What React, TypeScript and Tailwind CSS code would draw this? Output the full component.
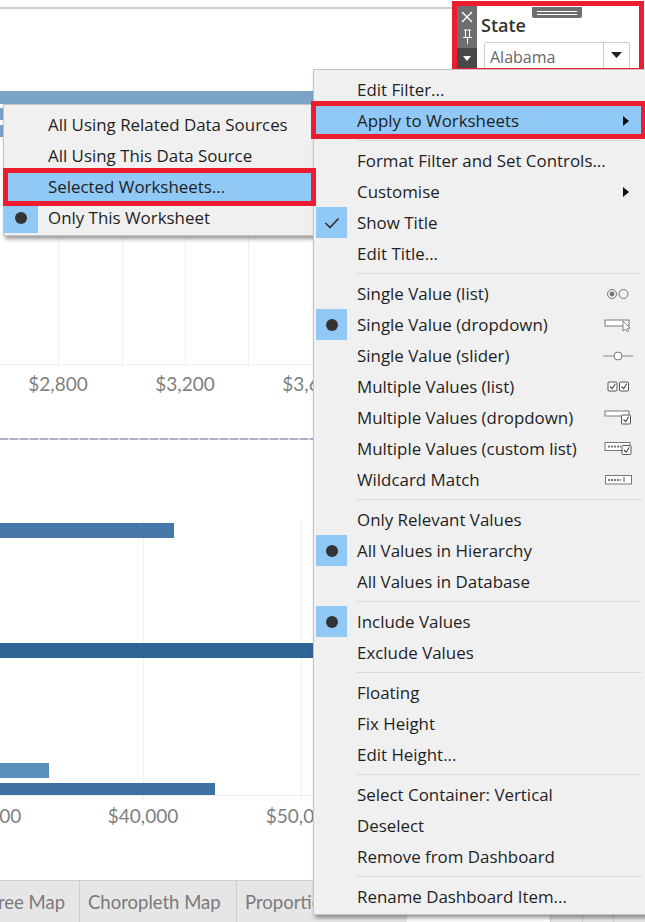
import { ReactNode } from "react"

const menuFont = "font-['Open_Sans',sans-serif] text-[16.9px] text-[#1f1f1f]"

const Sep = ({ inset = 357 }: { inset?: number }) => (
  <div className="flex h-[9px] items-center pr-[5px]" style={{ paddingLeft: inset - 314 }}>
    <div className="h-px w-full bg-[#d9d9d9]" />
  </div>
)

const Dot = () => <div className="h-[12px] w-[12px] rounded-full bg-[#333]" />

type RowProps = {
  label: string
  radio?: boolean
  check?: boolean
  arrow?: boolean
  active?: boolean
  icon?: ReactNode
}

const Row = ({ label, radio, check, arrow, active, icon }: RowProps) => (
  <div className={`relative flex h-[31px] items-center ${active ? "bg-[#90c8f6]" : ""}`}>
    <div className={`ml-[2px] flex h-[31px] w-[31px] items-center justify-center ${radio || check ? "bg-[#90c8f6]" : ""}`}>
      {radio && <Dot />}
      {check && (
        <svg width="16" height="12" viewBox="0 0 16 12">
          <path d="M1.5 6 L6 10.5 L14.5 1.5" fill="none" stroke="#333" strokeWidth="1.7" />
        </svg>
      )}
    </div>
    <span className="ml-[10px] whitespace-nowrap">{label}</span>
    {arrow && (
      <svg className="absolute right-[17px]" width="6" height="10" viewBox="0 0 6 10">
        <path d="M0 0 L6 5 L0 10 Z" fill="#111" />
      </svg>
    )}
    {icon && <div className="absolute left-[288px] top-0 flex h-[31px] w-[32px] items-center justify-center">{icon}</div>}
  </div>
)

const IconRadios = () => (
  <svg width="24" height="12" viewBox="0 0 24 12" fill="none" stroke="#777">
    <circle cx="6" cy="6" r="4.5" />
    <circle cx="6" cy="6" r="2.4" fill="#777" stroke="none" />
    <circle cx="17.5" cy="6" r="4.5" />
  </svg>
)
const IconDropCursor = () => (
  <svg width="28" height="14" viewBox="0 0 28 14" fill="none">
    <rect x="1" y="2" width="24" height="6" fill="#fff" stroke="#777" />
    <path d="M19 3 L19 13 L21.5 11 L23 13.5 L24.5 13 L23.5 10.5 L26 10 Z" fill="#fff" stroke="#666" strokeWidth="0.8" />
  </svg>
)
const IconSlider = () => (
  <svg width="30" height="12" viewBox="0 0 30 12" fill="none">
    <rect x="0" y="5" width="30" height="2" fill="#bbb" />
    <circle cx="15" cy="6" r="4" fill="#fff" stroke="#777" />
  </svg>
)
const Tick = ({ x, y }: { x: number; y: number }) => (
  <g>
    <rect x={x} y={y} width="9" height="9" rx="1" fill="#fff" stroke="#555" />
    <path d={`M${x + 2} ${y + 4.5} l2.2 2.2 l3 -5`} stroke="#444" strokeWidth="1.1" fill="none" />
  </g>
)
const IconChecks = () => (
  <svg width="23" height="11" viewBox="0 0 23 11"><Tick x={1} y={1} /><Tick x={12.5} y={1} /></svg>
)
const IconDropCheck = () => (
  <svg width="28" height="17" viewBox="0 0 28 17" fill="none">
    <rect x="1" y="2" width="24" height="5" fill="#fff" stroke="#777" />
    <Tick x={17.5} y={6} />
  </svg>
)
const IconCustomList = () => (
  <svg width="28" height="15" viewBox="0 0 28 15" fill="none">
    <rect x="1" y="1.5" width="25" height="8" fill="#fff" stroke="#777" />
    <path d="M4 5.5 H17" stroke="#777" strokeDasharray="2 1" strokeWidth="2" />
    <Tick x={18} y={4.5} />
  </svg>
)
const IconWildcard = () => (
  <svg width="27" height="10" viewBox="0 0 27 10" fill="none">
    <rect x="0.5" y="0.5" width="26" height="8.5" fill="#fff" stroke="#777" />
    <path d="M3 5 H16" stroke="#777" strokeDasharray="2 1" strokeWidth="2" />
    <path d="M19 2 V7" stroke="#555" />
  </svg>
)

function FilterMenu() {
  return (
    <div className={`absolute left-[313px] top-[69px] w-[334px] border border-[#c4c4c4] bg-[#f0f0f0] pt-[4px] pb-[2px] shadow-[2px_3px_4px_rgba(0,0,0,0.4)] ${menuFont}`}>
      <Row label="Edit Filter..." />
      <Row label="Apply to Worksheets" arrow active />
      <Sep />
      <Row label="Format Filter and Set Controls..." />
      <Row label="Customise" arrow />
      <Row label="Show Title" check />
      <Row label="Edit Title..." />
      <Sep />
      <Row label="Single Value (list)" icon={<IconRadios />} />
      <Row label="Single Value (dropdown)" radio icon={<IconDropCursor />} />
      <Row label="Single Value (slider)" icon={<IconSlider />} />
      <Row label="Multiple Values (list)" icon={<IconChecks />} />
      <Row label="Multiple Values (dropdown)" icon={<IconDropCheck />} />
      <Row label="Multiple Values (custom list)" icon={<IconCustomList />} />
      <Row label="Wildcard Match" icon={<IconWildcard />} />
      <Sep />
      <Row label="Only Relevant Values" />
      <Row label="All Values in Hierarchy" radio />
      <Row label="All Values in Database" />
      <Sep />
      <Row label="Include Values" radio />
      <Row label="Exclude Values" />
      <Sep />
      <Row label="Floating" />
      <Row label="Fix Height" />
      <Row label="Edit Height..." />
      <Sep />
      <Row label="Select Container: Vertical" />
      <Row label="Deselect" />
      <Row label="Remove from Dashboard" />
      <Sep />
      <Row label="Rename Dashboard Item..." />
    </div>
  )
}

function WorksheetsMenu() {
  const sub = ["All Using Related Data Sources", "All Using This Data Source", "Selected Worksheets...", "Only This Worksheet"]
  return (
    <div className={`absolute left-[3px] top-[104px] w-[314px] border border-[#c4c4c4] bg-[#f0f0f0] pt-[4px] pb-[2px] shadow-[2px_3px_4px_rgba(0,0,0,0.4)] ${menuFont}`}>
      {sub.map((s, i) => (
        <div key={s} className={`flex h-[31px] items-center ${i === 2 ? "bg-[#90c8f6]" : ""}`}>
          <div className={`flex h-[31px] w-[34px] items-center justify-center ${i === 3 ? "bg-[#90c8f6]" : ""}`}>
            {i === 3 && <Dot />}
          </div>
          <span className="ml-[10px] whitespace-nowrap">{s}</span>
        </div>
      ))}
    </div>
  )
}

function StateFilter() {
  return (
    <div className="absolute left-[452px] top-px h-[72px] w-[192px] overflow-hidden border-[5px] border-[#ed1c2e] bg-white">
      <div className="flex h-full">
        <div className="flex w-[20px] flex-col items-center bg-[#6e6e6e]">
          <svg className="mt-[5px]" width="12" height="12" viewBox="0 0 12 12">
            <path d="M1 1 L11 11 M11 1 L1 11" stroke="#fff" strokeWidth="1.4" />
          </svg>
          <svg className="mt-[6px]" width="11" height="15" viewBox="0 0 11 15" fill="none" stroke="#fff">
            <path d="M2 1 H9 M3.5 1 V8 M7.5 1 V8 M1 8.5 H10 M5.5 9 V15" />
          </svg>
          <div className="mt-auto flex h-[20px] w-full items-center justify-center bg-[#474747]">
            <svg width="8" height="5" viewBox="0 0 8 5"><path d="M0 0 H8 L4 5 Z" fill="#fff" /></svg>
          </div>
        </div>
        <div className="flex-1 pl-[4px]">
          <div className="mt-[8px] font-['Open_Sans',sans-serif] text-[18px] leading-[22px] font-semibold text-[#333]">State</div>
          <div className="mt-[6px] ml-[3px] flex h-[30px] w-[146px] rounded-[2px] border border-[#ccc]">
            <span className="flex-1 pt-[2px] pl-[5px] font-['Open_Sans',sans-serif] text-[16px] leading-[24px] text-[#666]">Alabama</span>
            <div className="flex w-[26px] justify-center border-l border-[#ccc] pt-[9px]">
              <svg width="11" height="6" viewBox="0 0 11 6"><path d="M0 0 H11 L5.5 6 Z" fill="#222" /></svg>
            </div>
          </div>
        </div>
      </div>
      <div className="absolute left-[75px] top-[1px] flex h-[11px] w-[50px] flex-col justify-center gap-[2px] rounded-b-[2px] bg-[#6e6e6e] px-[5px]">
        <div className="h-px bg-white" />
        <div className="h-px bg-white" />
      </div>
    </div>
  )
}

const GRID1 = [58, 122, 185, 248]
const GRID2 = [143, 301]

export default function App() {
  const label = "font-['Lato',sans-serif] fill-[#7f7f7f] text-[19px]"
  return (
    <div className="relative h-[922px] w-[645px] overflow-hidden bg-white">
      <div className="flex h-full flex-col">
        <div className="mt-[7px] h-[2px] w-[453px] shrink-0 bg-[#cfcfcf]" />
        <svg className="shrink-0" width="645" height="429" viewBox="0 9 645 429">
          <rect x="0" y="91" width="320" height="13" fill="#7aa3c6" />
          <rect x="0" y="108" width="3" height="12" fill="#7aa3c6" />
          <rect x="0" y="125" width="3" height="12" fill="#7aa3c6" />
          {GRID1.map((x) => <rect key={x} x={x} y="236" width="1" height="131" fill="#f1f1f1" />)}
          <rect x="0" y="364" width="320" height="1" fill="#f1f1f1" />
          <text x="58" y="391" textAnchor="middle" className={label}>$2,800</text>
          <text x="185" y="391" textAnchor="middle" className={label}>$3,200</text>
          <text x="312" y="391" textAnchor="middle" className={label}>$3,600</text>
        </svg>
        <div className="h-[2px] w-[320px] shrink-0 bg-[repeating-linear-gradient(90deg,#aeaec4_0_8px,#dcdce6_8px_10px)]" />
        <svg className="shrink-0" width="645" height="440" viewBox="0 440 645 440">
          {GRID2.map((x) => <rect key={x} x={x} y="520" width="1" height="280" fill="#f1f1f1" />)}
          <rect x="0" y="795" width="320" height="1" fill="#f1f1f1" />
          <rect x="0" y="523" width="174" height="15" fill="#4577a8" />
          <rect x="0" y="643" width="320" height="15" fill="#2f6496" />
          <rect x="0" y="763" width="49" height="15" fill="#5b8fbb" />
          <rect x="0" y="783" width="215" height="12" fill="#3f72a3" />
          <text x="-14" y="823" textAnchor="middle" className={label}>$30,000</text>
          <text x="143" y="823" textAnchor="middle" className={label}>$40,000</text>
          <text x="301" y="823" textAnchor="middle" className={label}>$50,000</text>
        </svg>
        <div className="flex flex-1 border-t border-[#cfcfcf] bg-[#e6e6e6] font-['Lato',sans-serif] text-[18.5px] text-[#7a7a7a]">
          <div className="ml-[-10px] flex w-[90px] shrink-0 items-center justify-end border-r border-[#cfcfcf] pr-[14px] pt-[2px] whitespace-nowrap">Tree Map</div>
          <div className="flex w-[157px] shrink-0 items-center pl-[8px] pt-[2px] border-r border-[#cfcfcf] whitespace-nowrap">Choropleth Map</div>
          <div className="flex w-[170px] shrink-0 items-center pl-[8px] pt-[2px] whitespace-nowrap">Proportional</div>
          <div className="w-[143px] shrink-0 bg-white" />
          <div className="w-[33px] shrink-0 border-x border-[#cfcfcf]" />
          <div className="w-[31px] shrink-0 border-r border-[#cfcfcf]" />
        </div>
      </div>
      <StateFilter />
      <WorksheetsMenu />
      <FilterMenu />
      <div className="pointer-events-none absolute left-[311px] top-[101px] h-[38px] w-[334px] border-[5px] border-r-[4px] border-[#ed1c2e]" />
      <div className="pointer-events-none absolute left-[3px] top-[168px] h-[38px] w-[313px] border-[5px] border-[#ed1c2e]" />
    </div>
  )
}
